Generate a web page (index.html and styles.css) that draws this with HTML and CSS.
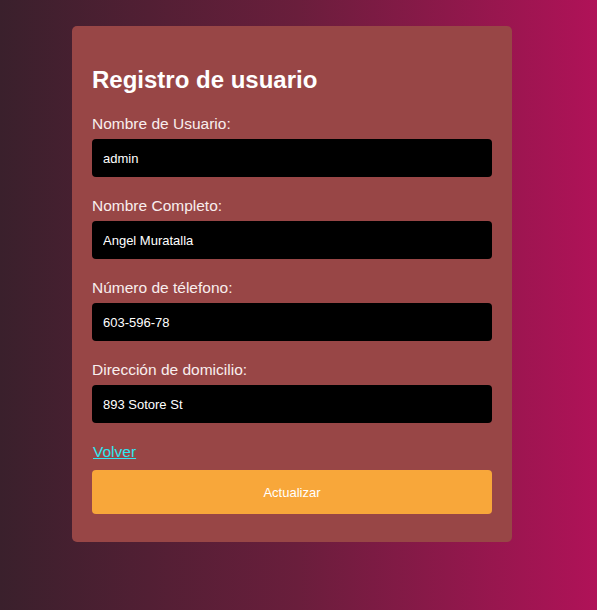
FILE: index.html
```html
<!DOCTYPE html>
<html lang="es">
<head>
<meta charset="utf-8">
<title>Registro de usuario</title>
<link rel="stylesheet" href="styles.css">
</head>
<body>
<form class="card">
  <h2 class="title">Registro de usuario</h2>
  <div class="field">
    <label class="label">Nombre de Usuario:</label>
    <input class="input" type="text" value="admin">
  </div>
  <div class="field">
    <label class="label">Nombre Completo:</label>
    <input class="input" type="text" value="Angel Muratalla">
  </div>
  <div class="field">
    <label class="label">Número de télefono:</label>
    <input class="input" type="text" value="603-596-78">
  </div>
  <div class="field">
    <label class="label">Dirección de domicilio:</label>
    <input class="input" type="text" value="893 Sotore St">
  </div>
  <div class="back"><a class="link" href="#">Volver</a></div>
  <button class="button" type="button">Actualizar</button>
</form>
</body>
</html>
```
FILE: styles.css
```css
html, body {
  margin: 0;
  height: 100%;
}
body {
  background: linear-gradient(to right, #3a202c 0%, #6a1e3c 50%, #b01258 100%);
  font-family: "Liberation Sans", Arial, sans-serif;
  padding: 26px 0 0 72px;
  box-sizing: border-box;
}
.card {
  width: 440px;
  box-sizing: border-box;
  background: #984646;
  border-radius: 5px;
  padding: 40px 20px 28px;
  display: flex;
  flex-direction: column;
}
.title {
  margin: 0 0 21px;
  font-size: 24px;
  font-weight: bold;
  color: #ffffff;
  line-height: 28px;
}
.field {
  display: flex;
  flex-direction: column;
  margin-bottom: 20px;
}
.label {
  color: #f8eeee;
  font-size: 15.5px;
  line-height: 18px;
  margin-bottom: 6px;
}
.input {
  height: 38px;
  box-sizing: border-box;
  background: #000;
  border: none;
  border-radius: 4px;
  color: #fff;
  font-family: "Liberation Sans", Arial, sans-serif;
  font-size: 13px;
  padding: 0 11px;
  outline: none;
}
.back {
  line-height: 18px;
  margin-bottom: 9px;
  padding-left: 1px;
}
.link {
  color: #2ee6f0;
  font-size: 15.5px;
  text-decoration: underline;
}
.button {
  height: 44px;
  background: #f8a73a;
  border: none;
  border-radius: 4px;
  color: #fff;
  font-family: "Liberation Sans", Arial, sans-serif;
  font-size: 13px;
}
```
